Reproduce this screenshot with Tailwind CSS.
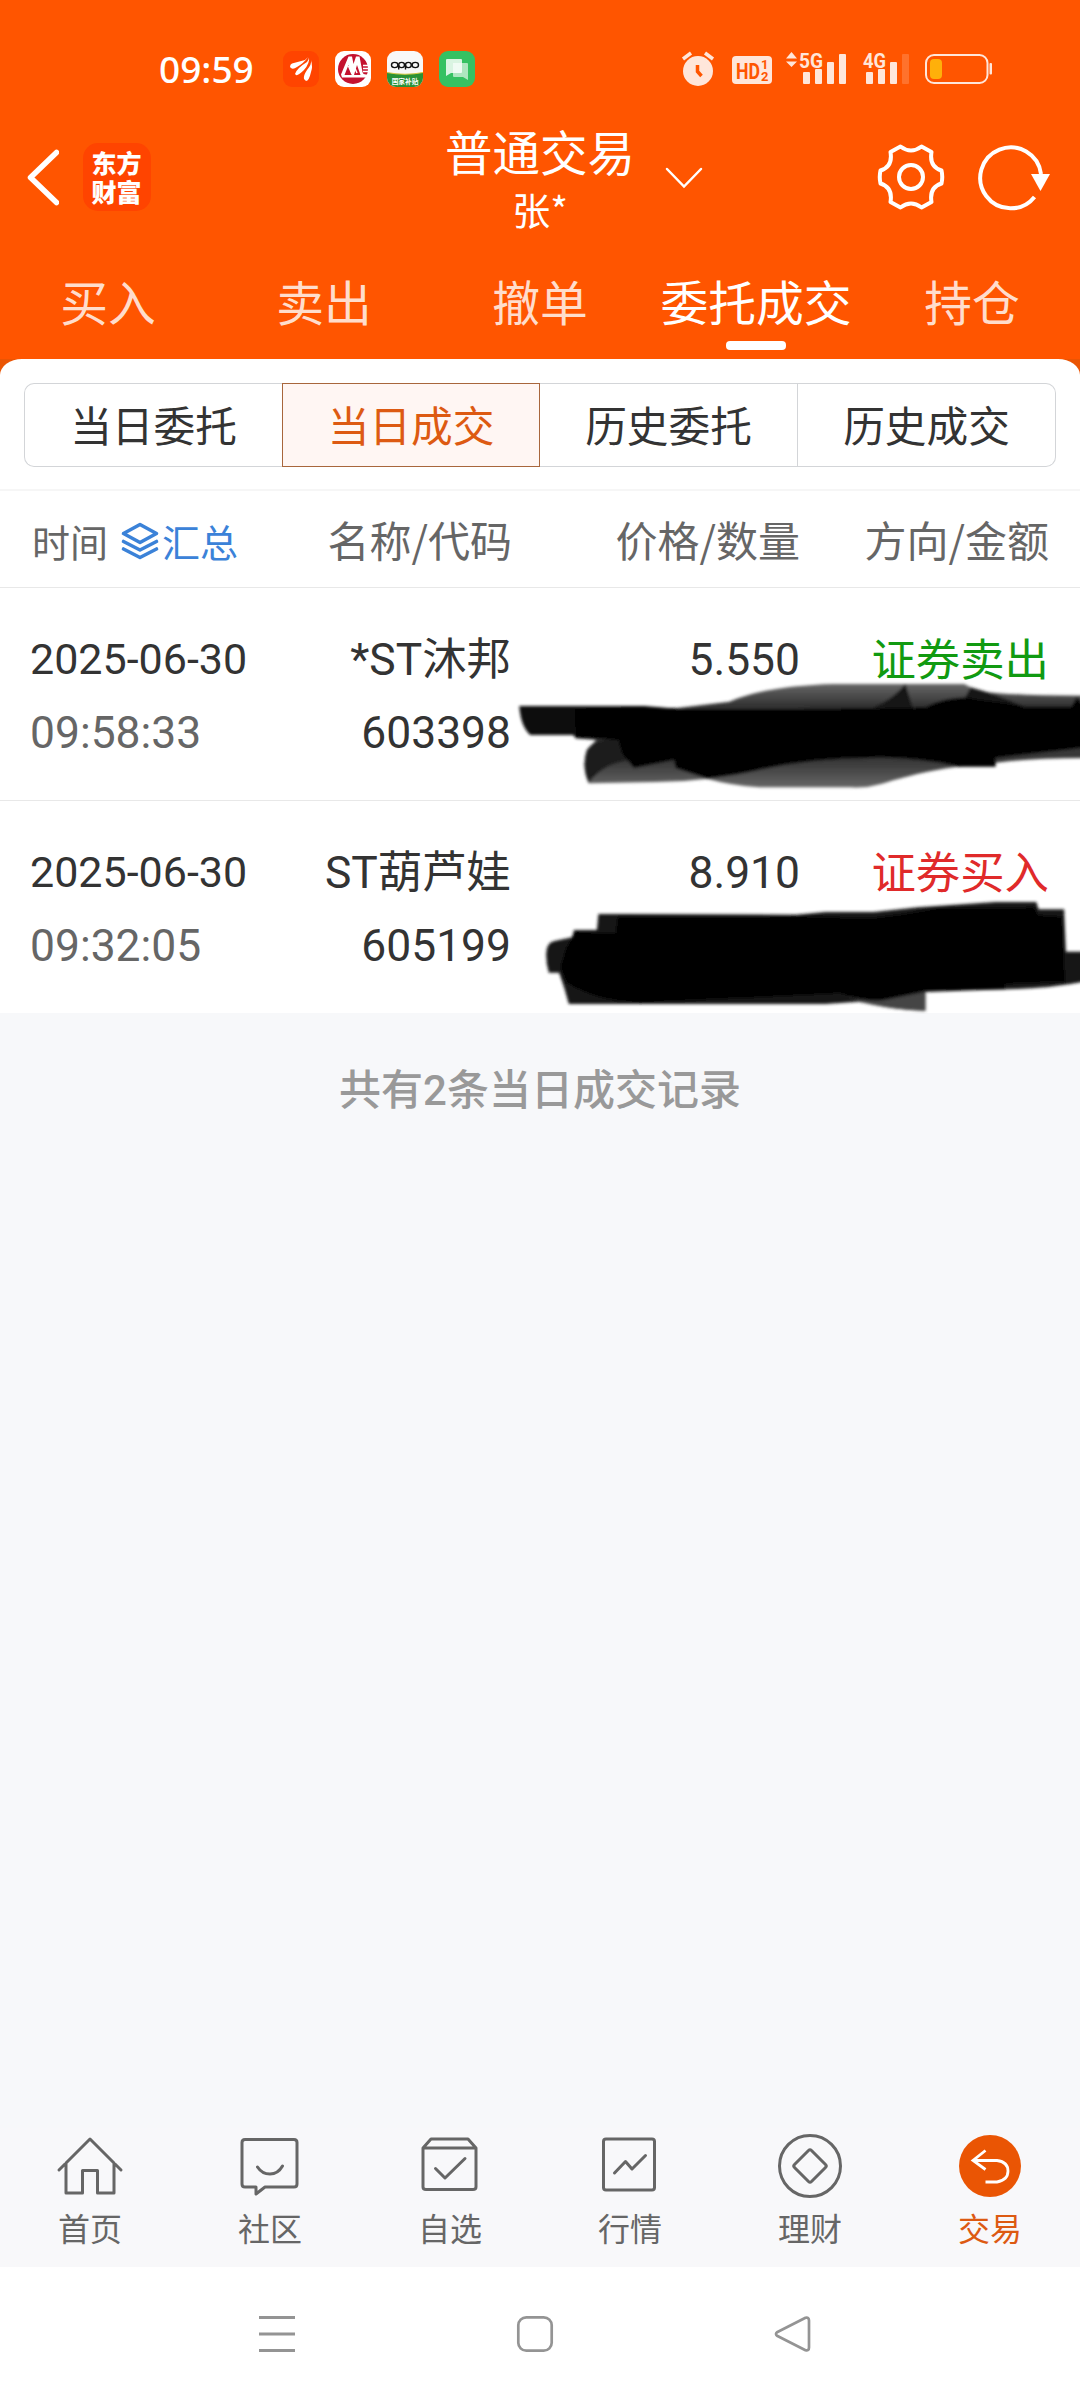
<!DOCTYPE html>
<html lang="zh-CN">
<head>
<meta charset="utf-8">
<title>普通交易</title>
<script src="https://cdn.jsdelivr.net/npm/@tailwindcss/browser@4"></script>
</head>
<body class="bg-white">
<div class="w-[1080px] h-[2400px] overflow-hidden flex flex-col bg-[#f7f8fa] font-['Roboto','Noto_Sans_CJK_SC',sans-serif] text-[#333]">

  <header class="h-[359px] bg-[#ff5500] text-white flex flex-col shrink-0">
    <!-- status bar -->
    <div class="h-[110px] pt-[28px] pl-[159px] pr-[87px] flex items-center justify-between shrink-0">
      <div class="flex items-center">
        <span class="w-[124px] text-[37px] leading-[40px] font-medium font-['Noto_Sans',sans-serif]">09:59</span>
        <div class="flex gap-4">
          <svg class="size-9" viewBox="0 0 36 36"><rect width="36" height="36" rx="9" fill="#ff4400"/><path d="M7 16Q7 13 9 12.500L22 9Q24 7 25 6Q21 12 14 16Q10 19 8 17ZM12 23Q14 17 24 11Q26 8 26 6.500Q27 12 21 19Q15 25 13 24ZM21 28Q20 25 24 19Q29 13 28 9Q30 16 28 21Q26 30 23 30Z" fill="#fff"/></svg>
          <svg class="size-9" viewBox="0 0 36 36"><rect width="36" height="36" rx="9" fill="#fff"/><circle cx="18" cy="18" r="15" fill="#c4122f"/><path d="M6 23.500L13.500 5.500H17L18.500 13L21 5.500H24.500L27.500 21Q28 23.500 31 23.500H33L32 26.500H7Z" fill="#fff"/><path d="M9.500 24L13.500 14L17 24ZM19 24L22 14L25.500 24Z" fill="#c4122f"/><path d="M13.500 15L16.500 22L19 15L22 22" fill="none" stroke="#fff" stroke-width="1.500"/><path d="M28 14.500H36M28 17.500H36M28 20.500H36" stroke="#fff" stroke-width="1.300"/></svg>
          <svg class="size-9" viewBox="0 0 36 36"><defs><clipPath id="a"><rect width="36" height="36" rx="9"/></clipPath></defs><g clip-path="url(#a)"><rect width="36" height="36" fill="#f8f8f8"/><path d="M0 21.500Q18 25 36 21.500V36H0Z" fill="#2a9136"/><path d="M0 21.500Q18 25 36 21.500" stroke="#d8c840" fill="none"/></g><g fill="none" stroke="#111" stroke-width="1.400"><ellipse cx="7.700" cy="14" rx="3.200" ry="2.600"/><ellipse cx="14.600" cy="14" rx="2.900" ry="2.600"/><ellipse cx="21.400" cy="14" rx="2.900" ry="2.600"/><ellipse cx="28.300" cy="14" rx="3.200" ry="2.600"/><path d="M11.700 14V18.500M18.500 14V18.500"/></g><text x="18" y="32.500" text-anchor="middle" font-size="6.700" font-weight="700" fill="#fff">国家补贴</text></svg>
          <svg class="size-9" viewBox="0 0 36 36"><rect width="36" height="36" rx="9" fill="#35c162"/><path d="M14 12H28Q29 12 29 13V29L24 26H15Q14 26 14 25Z" fill="#fff" fill-opacity=".6"/><path d="M8 8H22Q23 8 23 9V21Q23 22 22 22H12L7 25V9Q7 8 8 8Z" fill="#fff" fill-opacity=".82"/></svg>
        </div>
      </div>
      <svg class="w-[312px] h-10" viewBox="681 49 312 40">
        <g fill="#ffe6da">
          <circle cx="698" cy="71" r="15"/>
          <path d="M683 59L691 53M713 59L705 53" stroke="#ffe6da" stroke-width="3.500" fill="none"/>
          <path d="M697.500 65V71.500L701.500 76" stroke="#ff5500" stroke-width="3.500" fill="none"/>
          <rect x="732" y="56" width="40" height="28" rx="4"/>
          <text x="736" y="78.500" font-size="22" font-weight="700" fill="#ff5500" textLength="24" lengthAdjust="spacingAndGlyphs">HD</text>
          <text x="761" y="69" font-size="13" font-weight="700" fill="#ff5500">1</text>
          <text x="761" y="81" font-size="13" font-weight="700" fill="#ff5500">2</text>
          <path d="M786 58.500L791.500 52L797 58.500ZM786 61.500L791.500 67L797 61.500Z"/>
          <text x="799" y="67.500" font-size="21" font-weight="700" textLength="24" lengthAdjust="spacingAndGlyphs">5G</text>
          <rect x="803" y="72" width="7" height="12" rx="1"/><rect x="815" y="69" width="7" height="15" rx="1"/><rect x="827" y="62" width="7" height="22" rx="1"/><rect x="839" y="54" width="7" height="30" rx="1"/>
          <text x="863" y="67.500" font-size="21" font-weight="700" textLength="23" lengthAdjust="spacingAndGlyphs">4G</text>
          <rect x="866" y="72" width="7" height="12" rx="1"/><rect x="878" y="69" width="7" height="15" rx="1"/><rect x="890" y="62" width="7" height="22" rx="1"/><rect x="902" y="54" width="7" height="30" rx="1" fill-opacity=".2"/>
          <rect x="926" y="55" width="61.500" height="28" rx="8" fill="none" stroke="#ffe6da" stroke-width="2"/>
          <rect x="930" y="59" width="12" height="20" rx="4" fill="#ffb00a"/>
          <rect x="989.500" y="63" width="2.500" height="11.500" rx="1"/>
        </g>
      </svg>
    </div>

    <!-- title bar -->
    <div class="h-[134px] grid grid-cols-[420px_1fr_420px] items-center shrink-0">
      <div class="flex items-center pl-[26px] gap-6">
        <svg class="w-[33px] h-[60px]" viewBox="0 0 33 60"><path d="M30.500 5.500L4.500 30.500L30.500 55.500" fill="none" stroke="#fff" stroke-width="5.500" stroke-linecap="round" stroke-linejoin="round"/></svg>
        <div class="size-[68px] rounded-[15px] bg-[#ff4400] flex items-center justify-center"><span class="w-[51px] break-all text-[25px] leading-[29px] font-black font-['Noto_Sans_CJK_SC',sans-serif]">东方财富</span></div>
      </div>
      <div class="flex flex-col items-center font-['Noto_Sans_CJK_SC',sans-serif] relative pt-[3px]">
        <span class="text-[47.500px] leading-[60px]">普通交易</span>
        <span class="text-[38px] leading-[56px]">张*</span>
        <svg class="absolute left-[244px] top-[48px] w-[40px] h-[24px]" viewBox="0 0 40 24"><path d="M3 3L20 20.500L37 3" fill="none" stroke="#fff" stroke-width="2.500" stroke-linecap="round"/></svg>
      </div>
      <div class="flex items-center justify-end pr-[29px] gap-[33px]">
        <svg class="size-[68px]" viewBox="-34 -34 68 68" fill="none" stroke="#fff" stroke-width="4" stroke-linejoin="round"><circle r="12"/><path d="M-10.500 -30.500Q0 -22.500 10.500 -30.500L20.500 -25Q18 -10.500 30.500 -6.500Q32 0 30.500 6.500Q18 10.500 20.500 25L10.500 30.500Q0 22.500 -10.500 30.500L-20.500 25Q-18 10.500 -30.500 6.500Q-32 0 -30.500 -6.500Q-18 -10.500 -20.500 -25Z"/></svg>
        <svg class="w-[73px] h-[68px]" viewBox="-33 -34 73 68"><path d="M23.500 20A30.500 30.500 0 1 1 30 -3" fill="none" stroke="#fff" stroke-width="4"/><path d="M20 -3H39L29.500 14Z" fill="#fff"/></svg>
      </div>
    </div>

    <!-- trade tabs -->
    <nav class="h-[115px] grid grid-cols-5 text-center text-[47.800px] leading-[114px] text-[#ffddcc] font-['Noto_Sans_CJK_SC',sans-serif]">
      <span>买入</span><span>卖出</span><span>撤单</span>
      <span class="relative text-white whitespace-nowrap">委托成交<i class="absolute left-[78px] bottom-[9px] w-[60px] h-[9px] rounded-[4px] bg-white"></i></span>
      <span>持仓</span>
    </nav>
  </header>

  <main class="grow bg-[#f7f8fa]">
    <div class="bg-[linear-gradient(#ea5504_0_16px,#fff_16px)]">
      <div class="bg-white rounded-t-[22px_16px] h-[132px] border-b-[2px] border-[#f6f6f6] px-6 pt-6">
        <div class="h-[84px] grid grid-cols-4 text-center text-[41.700px] leading-[81px] font-['Noto_Sans_CJK_SC',sans-serif]">
          <span class="border border-r-0 border-[#d3d5d8] rounded-l-[10px]">当日委托</span>
          <span class="border border-[#a8663c] bg-[#fff6f3] text-[#dd5a12]">当日成交</span>
          <span class="border border-l-0 border-[#d3d5d8]">历史委托</span>
          <span class="border border-l-0 border-[#d3d5d8] rounded-r-[10px]">历史成交</span>
        </div>
      </div>
    </div>

    <div class="relative">
      <div class="h-[97px] bg-white border-b border-[#e8e8e8] pl-8 pr-[31px] grid grid-cols-[200px_280px_288px_1fr] items-center text-right text-[42px] leading-[60px] text-[#666] whitespace-nowrap font-['Noto_Sans_CJK_SC',sans-serif]">
        <div class="flex items-center text-[38px] pt-[4px]">
          <span class="shrink-0">时间</span>
          <svg class="w-[38px] h-[38px] ml-[13px] mr-[3px] shrink-0" viewBox="0 0 38 38" fill="none" stroke="#3b82d8" stroke-width="3.600" stroke-linejoin="round" stroke-linecap="round"><path d="M19 2.500L35.500 11.500L19 20.500L2.500 11.500ZM2.500 19.500L19 28L35.500 19.500M2.500 27L19 35.500L35.500 27"/></svg>
          <span class="text-[#3b82d8] shrink-0">汇总</span>
        </div>
        <span>名称/代码</span><span>价格/数量</span><span>方向/金额</span>
      </div>

      <div class="h-[213px] bg-white border-b border-[#e8e8e8] pl-[30px] pr-[31px] pt-[34px] grid grid-cols-[220px_261px_289px_1fr] grid-rows-[74px_74px] text-right text-[44.400px] leading-[74px] whitespace-nowrap">
        <span class="text-left text-[43px]">2025-06-30</span><span class="pt-px">*ST沐邦</span><span class="pt-px">5.550</span><span class="pt-[2px] text-[#119a11]">证券卖出</span>
        <span class="text-left text-[#666]">09:58:33</span><span>603398</span>
      </div>
      <div class="h-[212px] bg-white pl-[30px] pr-[31px] pt-[34px] grid grid-cols-[220px_261px_289px_1fr] grid-rows-[74px_74px] text-right text-[44.400px] leading-[74px] whitespace-nowrap">
        <span class="text-left text-[43px]">2025-06-30</span><span class="pt-px">ST葫芦娃</span><span class="pt-px">8.910</span><span class="pt-[2px] text-[#e02a2a]">证券买入</span>
        <span class="text-left text-[#666]">09:32:05</span><span>605199</span>
      </div>

      <!-- marker strokes over quantity and amount -->
      <svg class="absolute left-[500px] top-[109px] w-[580px] h-[520px]" viewBox="0 0 1568 1560" preserveAspectRatio="none">
        <defs>
          <filter id="s" x="-5%" y="-5%" width="110%" height="110%"><feGaussianBlur stdDeviation="4"/></filter>
          <linearGradient id="g" x1="0" y1="0" x2="0" y2="1"><stop offset="0" stop-color="#666"/><stop offset=".22" stop-color="#303030"/><stop offset=".75" stop-color="#383838"/><stop offset="1" stop-color="#666"/></linearGradient>
        </defs>
        <g filter="url(#s)">
          <path fill="url(#g)" d="M200 325L480 324L620 305C690 270 800 255 900 252L1255 252L1290 272Q1360 287 1600 287V474Q1440 474 1340 488C1180 500 1080 535 1030 552Q990 565 950 562H700Q620 555 560 536Q490 546 420 546L240 550Q220 500 235 450L260 420L205 415Z"/>
          <path fill="#111" d="M52 318H390L480 326L470 420L205 415L198 405H82Q56 380 52 318Z"/>
          <path fill="#1c1c1c" d="M235 450Q260 410 330 420L350 480Q280 490 240 548Q220 500 235 450Z"/>
          <path fill="#161616" d="M1010 322Q1060 300 1096 252L1116 325ZM1240 330L1272 262Q1350 285 1420 322Z"/>
          <path d="M202 326L390 320L490 328H740L1000 324L1150 322Q1200 292 1262 292L1300 300Q1380 310 1420 320H1545L1560 290L1600 350V440L1340 474V500H1240Q1120 470 1000 474Q840 474 700 510Q620 530 560 536L475 505L470 480L362 505L330 460L320 420L205 412Z"/>
          <path fill="#151515" d="M125 1060Q125 1025 150 1022L195 1012L200 990H262L266 942H330L800 944L880 936H1010L1130 922L1340 906H1450L1456 928H1525L1530 1055H1600V1140Q1500 1165 1368 1168L1150 1176V1232Q1070 1230 970 1205L880 1212H186L174 1165L160 1118H132Q124 1090 125 1060Z"/>
          <path d="M205 995L312 1000L318 950L550 952L800 948L1000 955Q1090 945 1180 925L1445 922L1455 945L1520 950L1528 1145L1366 1152V1168L1150 1170L1040 1200Q960 1200 920 1180Q760 1190 640 1195L380 1208Q260 1205 180 1150L162 1100L180 1040Z"/>
          <path fill="#444" d="M920 1184Q1000 1210 1040 1200L1150 1176V1232Q1070 1230 1000 1212Z"/>
        </g>
      </svg>
    </div>

    <p class="mt-[43px] text-center text-[42px] leading-[70px] font-medium text-[#999]">共有2条当日成交记录</p>
  </main>

  <!-- bottom tabs -->
  <nav class="h-[139px] shrink-0 grid grid-cols-6 justify-items-center text-[32px] text-[#666] leading-[46px] font-['Noto_Sans_CJK_SC',sans-serif] bg-[#f8f8fa]">
    <div class="flex flex-col items-center"><svg class="size-[76px]" viewBox="-38 -38 76 76" fill="none" stroke="#666" stroke-width="3" stroke-linejoin="round" stroke-linecap="round"><path d="M-31 4L0 -27L31 4M-24 -3V27H-7.500V4.500H7.500V27H24V-3"/></svg><span>首页</span></div>
    <div class="flex flex-col items-center"><svg class="size-[76px]" viewBox="-38 -38 76 76" fill="none" stroke="#666" stroke-width="3" stroke-linejoin="round" stroke-linecap="round"><path d="M-25 -26.500H24Q27 -26.500 27 -23.500V18Q27 21 24 21H-5L-14 28V21H-25Q-28 21 -28 18V-23.500Q-28 -26.500 -25 -26.500ZM-12.500 1Q-8 8 0 8T12.500 0"/></svg><span>社区</span></div>
    <div class="flex flex-col items-center"><svg class="size-[76px]" viewBox="-38 -38 76 76" fill="none" stroke="#666" stroke-width="3" stroke-linejoin="round" stroke-linecap="round"><path d="M-27 -18L-19 -27H18L26 -18M-27 -18V21Q-27 23.500 -24 23.500H23Q26 23.500 26 21V-18ZM-14.500 2.500L-5 12L15 -7.500"/></svg><span>自选</span></div>
    <div class="flex flex-col items-center"><svg class="size-[76px]" viewBox="-38 -38 76 76" fill="none" stroke="#666" stroke-width="3" stroke-linejoin="round" stroke-linecap="round"><rect x="-26.500" y="-27" width="51" height="51" rx="2.500"/><path d="M-15.500 7L-4.500 -4.500L2 3L15.500 -10.500"/></svg><span>行情</span></div>
    <div class="flex flex-col items-center"><svg class="size-[76px]" viewBox="-38 -38 76 76" fill="none" stroke="#666" stroke-width="3" stroke-linejoin="round"><circle r="30.500"/><path d="M-1.500 -15.500Q0 -17 1.500 -15.500L15.500 -1.500Q17 0 15.500 1.500L1.500 15.500Q0 17 -1.500 15.500L-15.500 1.500Q-17 0 -15.500 -1.500Z"/></svg><span>理财</span></div>
    <div class="flex flex-col items-center text-[#dd5a12]"><svg class="size-[76px]" viewBox="-38 -38 76 76" fill="none" stroke="#fff" stroke-width="2.800"><circle r="31" fill="#ea5504" stroke="none"/><path d="M-4.500 -15.500L-17 -5.500L-4.500 3.500M-17 -5.500H7Q18 -4 18 5T7 16H-4.500"/></svg><span>交易</span></div>
  </nav>

  <!-- system navigation -->
  <div class="h-[133px] shrink-0 bg-white grid grid-cols-3 px-[148px] items-center justify-items-center">
    <svg class="size-10 mr-[4px]" viewBox="0 0 40 40" stroke="#949494" stroke-width="3"><path d="M2 3.500H38M2 20H38M2 36.500H38"/></svg>
    <svg class="size-10 mr-[10px]" viewBox="0 0 40 40" fill="none" stroke="#949494" stroke-width="2.700"><rect x="3.300" y="3.300" width="33.400" height="33.400" rx="8"/></svg>
    <svg class="size-10 mr-[16px]" viewBox="0 0 40 40" fill="none" stroke="#949494" stroke-width="2.700" stroke-linejoin="round"><path d="M4 18.300L32.500 3.800Q36 3 36 6.500V33.500Q36 37 32.500 36.200L4 21.700Q2 20 4 18.300Z"/></svg>
  </div>
</div>
</body>
</html>
